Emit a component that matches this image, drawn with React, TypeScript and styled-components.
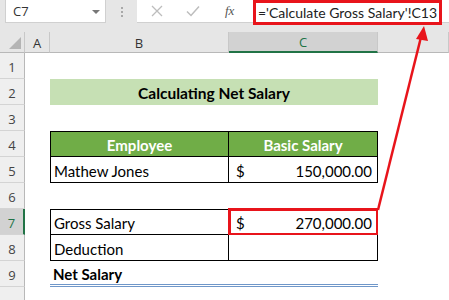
import React from 'react'
import styled, { createGlobalStyle } from 'styled-components'

const GlobalStyle = createGlobalStyle`
  html, body { margin: 0; padding: 0; background: #fff; }
  body { width: 449px; height: 300px; overflow: hidden; }
`

const Page = styled.div`
  position: relative;
  width: 449px;
  height: 300px;
  overflow: hidden;
  font-family: Lato, "Liberation Sans", sans-serif;
  color: #000;
`

const Toolbar = styled.div`
  display: flex;
  align-items: flex-start;
  height: 32px;
  background: #e6e6e6;
  box-sizing: border-box;
`

const NameBox = styled.div`
  margin-left: 5px;
  width: 101px;
  height: 23px;
  box-sizing: border-box;
  background: #fff;
  border: 1px solid #d0d0d0;
  border-top: none;
  display: flex;
  align-items: center;
  justify-content: space-between;
  padding: 0 5px 0 7px;
  font-family: "Open Sans", "Noto Sans", sans-serif;
  font-size: 13px;
  color: #333;
`

const Caret = styled.span`
  width: 0;
  height: 0;
  border-left: 4px solid transparent;
  border-right: 4px solid transparent;
  border-top: 4px solid #777;
  margin-top: 1px;
`

const Grip = styled.div`
  width: 31px;
  height: 23px;
  display: flex;
  flex-direction: column;
  align-items: center;
  justify-content: center;
  gap: 2px;
  span {
    width: 2px;
    height: 2px;
    background: #a8a8a8;
  }
`

const FormulaBar = styled.div`
  flex: 1;
  height: 23px;
  background: #fff;
  display: flex;
  align-items: center;
  border-bottom: 1px solid #d0d0d0;
  box-sizing: border-box;
`

const BarIcon = styled.span<{ $w: number }>`
  width: ${p => p.$w}px;
  display: flex;
  justify-content: center;
  align-items: center;
`

const Fx = styled.span`
  width: 12px;
  margin-left: 16px;
  font-family: "Liberation Serif", serif;
  font-style: italic;
  font-size: 13px;
  color: #555;
`

const FormulaText = styled.div`
  margin-left: 16px;
  height: 25px;
  width: 189px;
  margin-top: 2px;
  box-sizing: border-box;
  border: 3px solid #e8141b;
  display: flex;
  align-items: center;
  justify-content: center;
  font-size: 14px;
  color: #222;
  background: #fff;
  white-space: nowrap;
`

const Sheet = styled.div`
  display: grid;
  grid-template-columns: 25px 25px 179px 149px 1fr;
  grid-template-rows: 21px repeat(10, 26px);
`

const Corner = styled.div`
  background: #e6e6e6;
  border-right: 1px solid #c8c8c8;
  border-bottom: 1px solid #b8b8b8;
  box-sizing: border-box;
  position: relative;
  &::after {
    content: '';
    position: absolute;
    right: 3px;
    bottom: 3px;
    border-left: 12px solid transparent;
    border-bottom: 12px solid #b4b4b4;
  }
`

const ColHeader = styled.div<{ $selected?: boolean }>`
  background: ${p => (p.$selected ? '#d2d2d2' : '#e6e6e6')};
  border-right: 1px solid #c8c8c8;
  border-bottom: ${p => (p.$selected ? '2px solid #217346' : '1px solid #b8b8b8')};
  box-sizing: border-box;
  display: flex;
  align-items: center;
  justify-content: center;
  font-family: "Open Sans", "Noto Sans", sans-serif;
  font-size: 13px;
  color: ${p => (p.$selected ? '#217346' : '#333')};
  padding-top: 1px;
`

const RowHeader = styled.div<{ $selected?: boolean }>`
  background: ${p => (p.$selected ? '#d2d2d2' : '#efefef')};
  border-right: ${p => (p.$selected ? '2px solid #217346' : '1px solid #b8b8b8')};
  border-bottom: 1px solid #d4d4d4;
  box-sizing: border-box;
  display: flex;
  align-items: center;
  justify-content: center;
  font-family: "Open Sans", "Noto Sans", sans-serif;
  font-size: 13px;
  color: ${p => (p.$selected ? '#217346' : '#444')};
  padding-top: 3px;
`

type Side = 't' | 'r' | 'b' | 'l'

const Cell = styled.div<{
  $bg?: string
  $bold?: boolean
  $color?: string
  $size?: number
  $align?: 'left' | 'center'
  $borders?: Side[]
  $span?: number
  $under?: boolean
  $mark?: boolean
}>`
  grid-column: span ${p => p.$span ?? 1};
  background: ${p => p.$bg ?? '#fff'};
  color: ${p => p.$color ?? '#000'};
  font-weight: ${p => (p.$bold ? 700 : 400)};
  font-size: ${p => p.$size ?? 15}px;
  box-sizing: border-box;
  display: flex;
  align-items: center;
  justify-content: ${p => (p.$align === 'center' ? 'center' : 'flex-start')};
  padding: 2px 3px 0;
  white-space: nowrap;
  border-top: ${p => (p.$borders?.includes('t') ? '1px solid #000' : 'none')};
  border-right: ${p => (p.$borders?.includes('r') ? '1px solid #000' : 'none')};
  border-bottom: ${p =>
    p.$under ? '3px double #6f97c9' : p.$borders?.includes('b') ? '1px solid #000' : 'none'};
  border-left: ${p => (p.$borders?.includes('l') ? '1px solid #000' : 'none')};
  outline: ${p => (p.$mark ? '3px solid #e8141b' : 'none')};
  outline-offset: -2px;
`

const Money = styled.div`
  flex: 1;
  display: flex;
  justify-content: space-between;
  padding: 0 2px 0 4px;
`

const Arrow = styled.svg`
  position: absolute;
  left: 0;
  top: 0;
  pointer-events: none;
`

const Empty = () => <Cell />

const App: React.FC = () => {
  const rows = [1, 2, 3, 4, 5, 6, 7, 8, 9, 10]
  return (
    <Page>
      <GlobalStyle />
      <Toolbar>
        <NameBox>
          C7
          <Caret />
        </NameBox>
        <Grip>
          <span />
          <span />
          <span />
        </Grip>
        <FormulaBar>
          <BarIcon $w={40}>
            <svg width="12" height="12" viewBox="0 0 12 12">
              <path d="M1 1 L11 11 M11 1 L1 11" stroke="#bdbdbd" strokeWidth="1.3" fill="none" />
            </svg>
          </BarIcon>
          <BarIcon $w={32}>
            <svg width="14" height="12" viewBox="0 0 14 12">
              <path d="M1 6.5 L5 10.5 L13 1.5" stroke="#bdbdbd" strokeWidth="1.5" fill="none" />
            </svg>
          </BarIcon>
          <Fx>fx</Fx>
          <FormulaText>='Calculate Gross Salary'!C13</FormulaText>
        </FormulaBar>
      </Toolbar>

      <Sheet>
        <Corner />
        <ColHeader>A</ColHeader>
        <ColHeader>B</ColHeader>
        <ColHeader $selected>C</ColHeader>
        <ColHeader />

        {rows.map(r => (
          <React.Fragment key={r}>
            <RowHeader $selected={r === 7}>{r < 10 ? r : ''}</RowHeader>
            <Empty />
            {r === 2 && (
              <Cell $span={2} $bg="#c6e0b4" $bold $size={15.5} $align="center">
                Calculating Net Salary
              </Cell>
            )}
            {r === 4 && (
              <>
                <Cell $bg="#70ad47" $color="#fff" $bold $align="center" $borders={['t', 'l', 'r', 'b']}>
                  Employee
                </Cell>
                <Cell $bg="#70ad47" $color="#fff" $bold $align="center" $borders={['t', 'r', 'b']}>
                  Basic Salary
                </Cell>
              </>
            )}
            {r === 5 && (
              <>
                <Cell $borders={['l', 'r', 'b']}>Mathew Jones</Cell>
                <Cell $borders={['r', 'b']}>
                  <Money>
                    <span>$</span>
                    <span>150,000.00</span>
                  </Money>
                </Cell>
              </>
            )}
            {r === 7 && (
              <>
                <Cell $borders={['t', 'l', 'r', 'b']}>Gross Salary</Cell>
                <Cell $borders={['t', 'r', 'b']} $mark>
                  <Money>
                    <span>$</span>
                    <span>270,000.00</span>
                  </Money>
                </Cell>
              </>
            )}
            {r === 8 && (
              <>
                <Cell $borders={['l', 'r', 'b']}>Deduction</Cell>
                <Cell $borders={['r', 'b']} />
              </>
            )}
            {r === 9 && (
              <>
                <Cell $bold $under>
                  Net Salary
                </Cell>
                <Cell $under />
              </>
            )}
            {![2, 4, 5, 7, 8, 9].includes(r) && (
              <>
                <Empty />
                <Empty />
              </>
            )}
            <Empty />
          </React.Fragment>
        ))}
      </Sheet>

      <Arrow width="449" height="300" viewBox="0 0 449 300">
        <line x1="378" y1="210" x2="421" y2="37" stroke="#e8141b" strokeWidth="2.5" />
        <path d="M424 26 L416 39 L428 41 Z" fill="#e8141b" />
      </Arrow>
    </Page>
  )
}

export default App
